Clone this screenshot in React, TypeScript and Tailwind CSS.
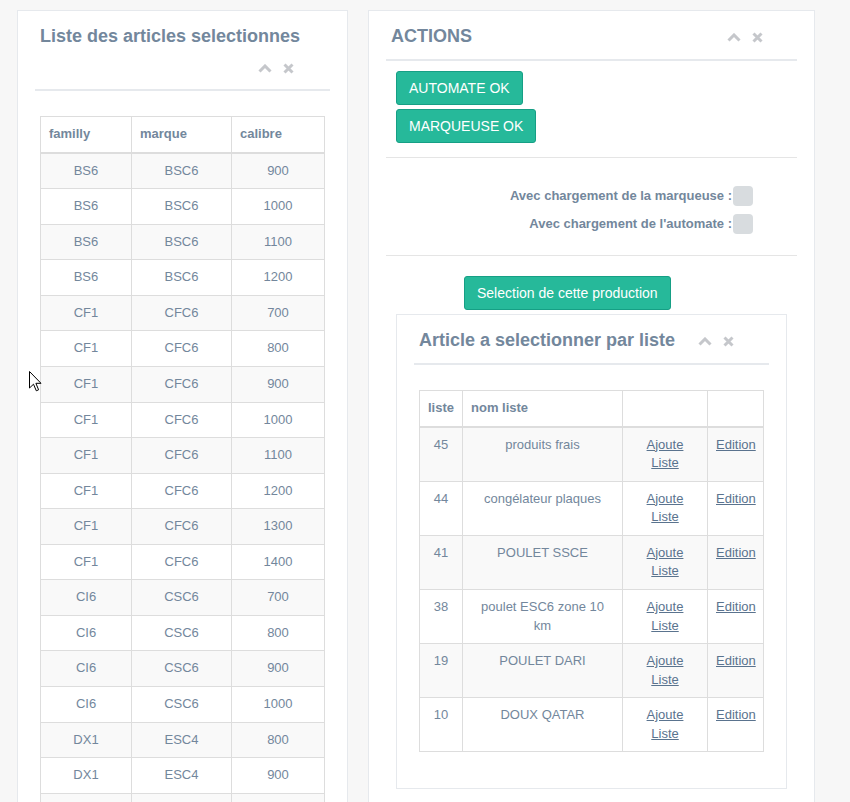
import React from "react";

const Chevron = () => (
  <svg width="14" height="9" viewBox="0 0 14 9">
    <path d="M1.5 7.5 L7 2 L12.5 7.5" stroke="#C5C7CB" strokeWidth="3" fill="none" />
  </svg>
);

const Close = () => (
  <svg width="11" height="11" viewBox="0 0 11 11">
    <path d="M1.5 1.5 L9.5 9.5 M9.5 1.5 L1.5 9.5" stroke="#C5C7CB" strokeWidth="3" />
  </svg>
);

const Toolbox = () => (
  <div className="flex items-center gap-[11px]">
    <Chevron />
    <Close />
  </div>
);

const leftRows: [string, string, string][] = [
  ["BS6", "BSC6", "900"],
  ["BS6", "BSC6", "1000"],
  ["BS6", "BSC6", "1100"],
  ["BS6", "BSC6", "1200"],
  ["CF1", "CFC6", "700"],
  ["CF1", "CFC6", "800"],
  ["CF1", "CFC6", "900"],
  ["CF1", "CFC6", "1000"],
  ["CF1", "CFC6", "1100"],
  ["CF1", "CFC6", "1200"],
  ["CF1", "CFC6", "1300"],
  ["CF1", "CFC6", "1400"],
  ["CI6", "CSC6", "700"],
  ["CI6", "CSC6", "800"],
  ["CI6", "CSC6", "900"],
  ["CI6", "CSC6", "1000"],
  ["DX1", "ESC4", "800"],
  ["DX1", "ESC4", "900"],
  ["\u00a0", "\u00a0", "\u00a0"],
];

const listRows: [string, string][] = [
  ["45", "produits frais"],
  ["44", "congélateur plaques"],
  ["41", "POULET SSCE"],
  ["38", "poulet ESC6 zone 10 km"],
  ["19", "POULET DARI"],
  ["10", "DOUX QATAR"],
];

const th = "border border-[#DDDDDD] border-b-2 px-2 py-2 text-left font-bold align-bottom";
const td = "border border-[#DDDDDD] px-2 py-2 text-center align-top";

const GreenButton = ({ children, className = "" }: { children: React.ReactNode; className?: string }) => (
  <button
    className={
      "h-[34px] px-[12px] rounded-[3px] border border-[#169F85] bg-[#26B99A] text-white text-[14px] leading-[20px] " +
      className
    }
  >
    {children}
  </button>
);

export default function App() {
  return (
    <div
      className="relative min-h-[802px] bg-[#F7F7F7] text-[#73879C] text-[13px] leading-[1.42857]"
      style={{ fontFamily: '"Liberation Sans", Arial, sans-serif' }}
    >
      <div className="flex items-start gap-[20px] pl-[17px] pt-[10px]">
        {/* Left panel */}
        <div className="w-[331px] shrink-0 border border-[#E6E9ED] bg-white px-[17px] py-[10px]">
          <div className="border-b-2 border-[#E6E9ED] px-[5px] pt-px pb-[6px] mb-[10px]">
            <h2 className="mt-[4px] mb-[7px] text-[18px] leading-[20px] font-bold whitespace-nowrap">
              Liste des articles selectionnes
            </h2>
            <div className="flex h-[30px] items-center justify-end pr-[31px]">
              <Toolbox />
            </div>
          </div>
          <div className="px-[5px] pt-[15px] pb-[6px]">
            <table className="w-full table-fixed border-collapse">
              <thead>
                <tr>
                  <th className={th + " w-[91px]"}>familly</th>
                  <th className={th + " w-[100px]"}>marque</th>
                  <th className={th}>calibre</th>
                </tr>
              </thead>
              <tbody>
                {leftRows.map((r, i) => (
                  <tr key={i} className={i % 2 === 0 ? "bg-[#F9F9F9]" : "bg-white"}>
                    <td className={td}>{r[0]}</td>
                    <td className={td}>{r[1]}</td>
                    <td className={td}>{r[2]}</td>
                  </tr>
                ))}
              </tbody>
            </table>
          </div>
        </div>

        {/* Right panel */}
        <div className="w-[447px] shrink-0 border border-[#E6E9ED] bg-white px-[17px] py-[10px]">
          <div className="flex items-center justify-between border-b-2 border-[#E6E9ED] pl-[5px] pr-[34px] pt-px pb-[6px] mb-[10px]">
            <h2 className="mt-[4px] mb-[7px] text-[18px] leading-[20px] font-bold">ACTIONS</h2>
            <Toolbox />
          </div>

          <div className="flex flex-col items-start gap-[4px] px-[10px]">
            <GreenButton>AUTOMATE OK</GreenButton>
            <GreenButton>MARQUEUSE OK</GreenButton>
          </div>

          <div className="mt-[14px] border-t border-[#E5E5E5]" />

          <div className="pt-[24px] pb-[17px] pr-[44px]">
            <div className="flex h-[28px] items-center justify-end">
              <span className="font-bold">Avec chargement de la marqueuse :</span>
              <span className="ml-px h-[20px] w-[20px] rounded-[4px] bg-[#D8DCDF]" />
            </div>
            <div className="flex h-[28px] items-center justify-end">
              <span className="font-bold">Avec chargement de l'automate :</span>
              <span className="ml-px h-[20px] w-[20px] rounded-[4px] bg-[#D8DCDF]" />
            </div>
          </div>

          <div className="border-t border-[#E5E5E5]" />

          <div className="mt-[20px] pl-[78px]">
            <GreenButton>Selection de cette production</GreenButton>
          </div>

          {/* Inner panel */}
          <div className="mt-[4px] ml-[10px] w-[391px] border border-[#E6E9ED] bg-white px-[17px] py-[10px]">
            <div className="flex items-center justify-between border-b-2 border-[#E6E9ED] pl-[5px] pr-[35px] pt-px pb-[6px] mb-[10px]">
              <h2 className="mt-[4px] mb-[7px] text-[18px] leading-[20px] font-bold whitespace-nowrap">
                Article a selectionner par liste
              </h2>
              <Toolbox />
            </div>
            <div className="px-[5px] pt-[15px] pb-[6px]">
              <table className="mb-[20px] w-full table-fixed border-collapse">
                <thead>
                  <tr>
                    <th className={th + " w-[43px]"}>liste</th>
                    <th className={th + " w-[160px]"}>nom liste</th>
                    <th className={th + " w-[85px]"}></th>
                    <th className={th}></th>
                  </tr>
                </thead>
                <tbody>
                  {listRows.map((r, i) => (
                    <tr key={i} className={i % 2 === 0 ? "bg-[#F9F9F9]" : "bg-white"}>
                      <td className={td}>{r[0]}</td>
                      <td className={td}>{r[1]}</td>
                      <td className={td}>
                        <a className="inline-block w-min text-[#5A738E] underline" href="#">
                          Ajoute Liste
                        </a>
                      </td>
                      <td className={td + " whitespace-nowrap px-0"}>
                        <a className="text-[#5A738E] underline" href="#">
                          Edition
                        </a>
                      </td>
                    </tr>
                  ))}
                </tbody>
              </table>
            </div>
          </div>
          <div className="h-[80px]" />
        </div>
      </div>

      {/* mouse cursor */}
      <svg className="absolute left-[29px] top-[371px]" width="13" height="21" viewBox="0 0 13 21">
        <path
          d="M0.5 0.5 V17 L4.5 13.2 L7.3 19.8 L9.6 18.8 L6.9 12.3 H12 Z"
          fill="white"
          stroke="black"
          strokeWidth="1"
          strokeLinejoin="miter"
        />
      </svg>
    </div>
  );
}
